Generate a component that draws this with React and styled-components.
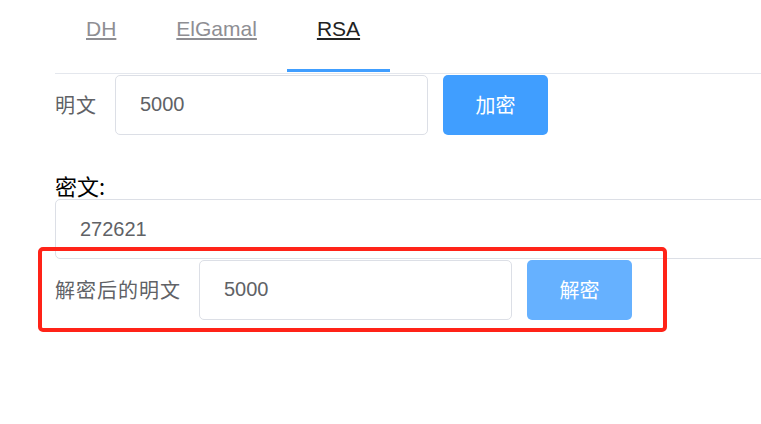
import styled, { createGlobalStyle } from "styled-components";

const GlobalStyle = createGlobalStyle`
  html, body {
    margin: 0;
    padding: 0;
    background: #fff;
    overflow: hidden;
  }
  body {
    font-family: "Liberation Sans", "Noto Sans CJK SC", sans-serif;
  }
`;

const Page = styled.div`
  position: relative;
  width: 761px;
  height: 424px;
  padding-left: 55px;
  box-sizing: border-box;
`;

const TabBar = styled.div`
  display: flex;
  border-bottom: 1px solid #e4e7ed;
  padding-left: 1px;
`;

const Tab = styled.div`
  height: 72px;
  box-sizing: border-box;
  padding: 16px 30px 0;
  margin-bottom: 1px;
  font-size: 21px;
  line-height: 26px;
  text-decoration: underline;
  text-underline-offset: 2px;
  color: ${(p) => (p.active ? "#222" : "#8e8e93")};
  border-bottom: 3px solid ${(p) => (p.active ? "#409eff" : "transparent")};
  cursor: pointer;
`;

const Row = styled.div`
  display: flex;
  align-items: center;
  height: 61px;
`;

const Label = styled.span`
  font-family: "Noto Sans CJK SC", sans-serif;
  font-size: 20px;
  color: #606266;
  margin-right: 18px;
  letter-spacing: 1px;
`;

const Input = styled.input`
  display: block;
  width: ${(p) => p.w || 313}px;
  height: ${(p) => p.h || 60}px;
  box-sizing: border-box;
  border: 1px solid #dcdfe6;
  border-radius: 5px;
  padding: 0 24px;
  font-family: "Liberation Sans", sans-serif;
  font-size: 20px;
  color: #606266;
  outline: none;
  background: #fff;
`;

const Button = styled.button`
  width: 105px;
  height: 60px;
  margin-left: 15px;
  border: none;
  border-radius: 5px;
  background: ${(p) => (p.light ? "#66b1ff" : "#409eff")};
  color: #fff;
  font-family: "Noto Sans CJK SC", sans-serif;
  font-size: 20px;
  cursor: pointer;
`;

const Title = styled.div`
  margin-top: 36px;
  font-family: "Noto Sans CJK SC", sans-serif;
  font-size: 22px;
  line-height: 28px;
  color: #000;
`;

const Highlight = styled.div`
  position: absolute;
  left: 38px;
  top: 247px;
  width: 629px;
  height: 85px;
  box-sizing: border-box;
  border: 4px solid #ff2318;
  border-radius: 5px;
  pointer-events: none;
`;

export default function App() {
  return (
    <>
      <GlobalStyle />
      <Page>
        <TabBar>
          <Tab>DH</Tab>
          <Tab>ElGamal</Tab>
          <Tab active>RSA</Tab>
        </TabBar>
        <Row>
          <Label>明文</Label>
          <Input defaultValue="5000" />
          <Button>加密</Button>
        </Row>
        <Title>密文:</Title>
        <Input w={740} defaultValue="272621" />
        <Row>
          <Label>解密后的明文</Label>
          <Input defaultValue="5000" />
          <Button light>解密</Button>
        </Row>
        <Highlight />
      </Page>
    </>
  );
}
